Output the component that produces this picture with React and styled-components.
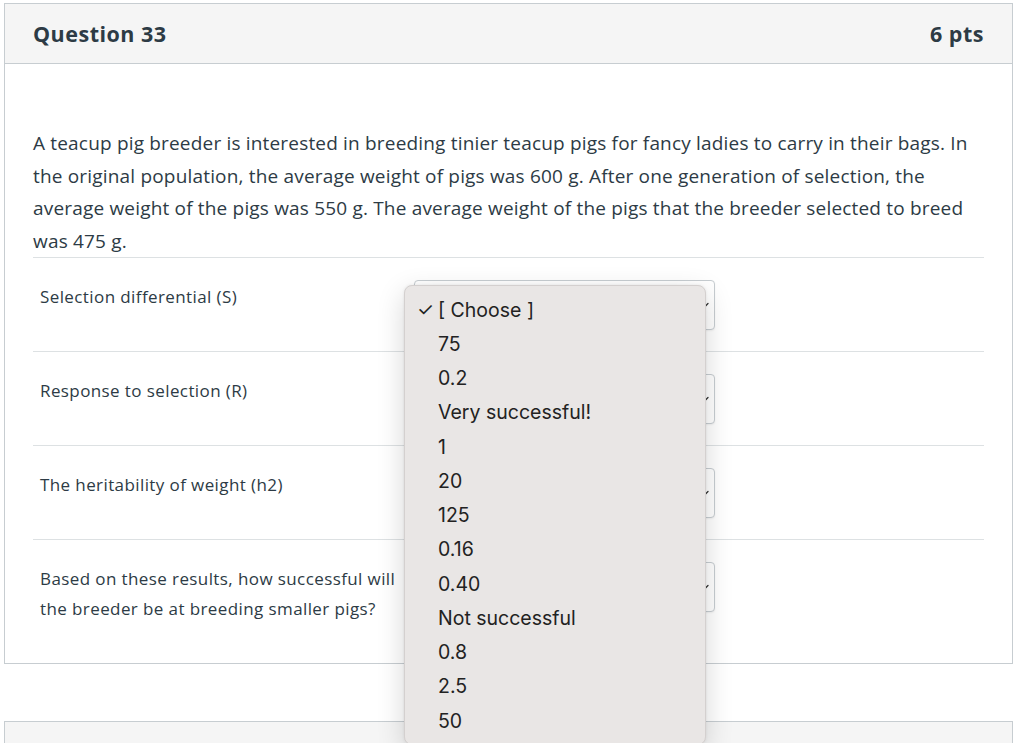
import { createGlobalStyle } from "styled-components"
import styled from "styled-components"

const GlobalStyle = createGlobalStyle`
    body {
        margin: 0;
        background-color: #ffffff;
        font-family: 'Open Sans', 'Helvetica Neue', Arial, sans-serif;
        color: #2d3b45;
        overflow: hidden;
    }
`

const paragraph = [
    "A teacup pig breeder is interested in breeding tinier teacup pigs for fancy ladies to carry in their bags. In",
    "the original population, the average weight of pigs was 600 g. After one generation of selection, the",
    "average weight of the pigs was 550 g. The average weight of the pigs that the breeder selected to breed",
    "was 475 g.",
]

const rows = [
    { label: ["Selection differential (S)"], open: true },
    { label: ["Response to selection (R)"] },
    { label: ["The heritability of weight (h2)"] },
    { label: ["Based on these results, how successful will", "the breeder be at breeding smaller pigs?"] },
]

const options = [
    "[ Choose ]", "75", "0.2", "Very successful!", "1", "20", "125",
    "0.16", "0.40", "Not successful", "0.8", "2.5", "50",
]

function Chevron() {
    return (
        <svg width="10" height="10" viewBox="0 0 10 10">
            <path d="M2 3.5 L5 6.5 L8 3.5" fill="none" stroke="#333" strokeWidth="1.3" strokeLinecap="round" />
        </svg>
    )
}

function Dropdown() {
    return (
        <Menu>
            {options.map((opt, i) => (
                <Option key={opt}>
                    <Check>{i === 0 ? "✓" : ""}</Check>
                    {opt}
                </Option>
            ))}
        </Menu>
    )
}

export default function App() {
    return (
        <Page>
            <GlobalStyle />
            <Card>
                <Header>
                    <Title>Question 33</Title>
                    <Title>6 pts</Title>
                </Header>
                <Body>
                    <Text>
                        {paragraph.map(line => <div key={line}>{line}</div>)}
                    </Text>
                    {rows.map((row, i) => (
                        <Row key={i}>
                            <Label>
                                {row.label.map(line => <div key={line}>{line}</div>)}
                            </Label>
                            <SelectWrap>
                                <Select>
                                    <Chevron />
                                </Select>
                                {row.open && <Dropdown />}
                            </SelectWrap>
                        </Row>
                    ))}
                </Body>
            </Card>
            <Card>
                <Header $raised>
                    <Title>Question 34</Title>
                    <Title>6 pts</Title>
                </Header>
            </Card>
        </Page>
    )
}

const Page = styled.div`
    padding: 3px 11px 0 4px;
    display: flex;
    flex-direction: column;
    gap: 57px;
`

const Card = styled.div`
    border: 1px solid #c7cdd1;
    background-color: #ffffff;
`

const Header = styled.div`
    height: 59px;
    padding: 0 28px;
    padding-bottom: ${props => props.$raised ? '8px' : '0'};
    box-sizing: content-box;
    background-color: #f5f5f5;
    border-bottom: 1px solid #c7cdd1;
    display: flex;
    justify-content: space-between;
    align-items: center;
    margin-bottom: ${props => props.$raised ? '-8px' : '0'};
`

const Title = styled.div`
    font-size: 21.5px;
    font-weight: 700;
    letter-spacing: 0.5px;
    color: #2d3b45;
`

const Body = styled.div`
    padding: 63px 28px 18px 28px;
`

const Text = styled.div`
    font-size: 19px;
    line-height: 32.6px;
    letter-spacing: 0.18px;
    white-space: nowrap;
    color: #2d3b45;
`

const Row = styled.div`
    border-top: 1px solid #dde1e3;
    padding: 22px 0 21px 0;
    display: flex;
`

const Label = styled.div`
    flex: 0 0 381px;
    box-sizing: border-box;
    padding-left: 7px;
    padding-top: 2px;
    font-size: 17px;
    letter-spacing: 0.4px;
    line-height: 30px;
    white-space: nowrap;
    color: #2d3b45;
`

const SelectWrap = styled.div`
    position: relative;
`

const Select = styled.div`
    width: 295px;
    height: 48px;
    border: 1px solid #c7cdd1;
    border-radius: 4px;
    background-color: #ffffff;
    box-shadow: 0 1px 2px rgba(0, 0, 0, 0.06);
    display: flex;
    justify-content: flex-end;
    align-items: center;
    padding-right: 4px;
    box-sizing: content-box;
`

const Menu = styled.div`
    position: absolute;
    left: -10px;
    top: 5px;
    width: 302px;
    padding: 6px 0;
    background-color: #e9e6e5;
    border-radius: 8px;
    border: 1px solid #d4d0cf;
    box-sizing: border-box;
    box-shadow: 0 8px 28px rgba(0, 0, 0, 0.16), 0 0 3px rgba(0, 0, 0, 0.08);
    font-family: 'Inter', 'Helvetica Neue', Arial, sans-serif;
    z-index: 10;
`

const Option = styled.div`
    height: 34.25px;
    display: flex;
    align-items: center;
    font-size: 19.5px;
    color: #222222;
`

const Check = styled.span`
    width: 33px;
    padding-left: 12px;
    box-sizing: border-box;
    font-size: 19px;
    color: #222222;
`
